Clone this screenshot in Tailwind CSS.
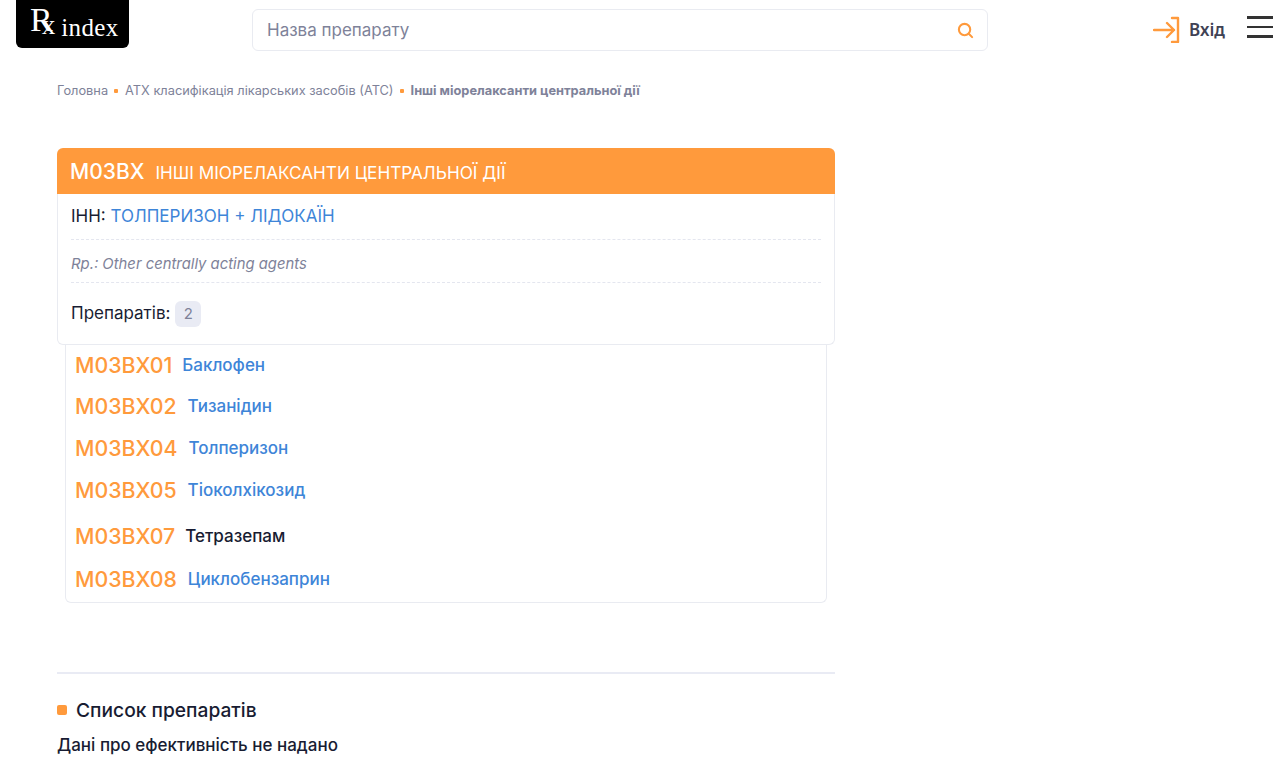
<!DOCTYPE html>
<html>
<head>
    <meta charset="utf-8">
    <title>M03BX</title>
    <script src="https://cdn.jsdelivr.net/npm/@tailwindcss/browser@4"></script>
</head>
<body class="bg-white font-['Inter','Noto_Sans',sans-serif] overflow-hidden">

    <!-- Header -->
    <header class="flex items-start h-[60px] pl-4 pr-[7px]">
        <a href="#" class="flex items-start w-[113px] h-12 bg-black rounded-b-md text-white font-['Liberation_Serif',serif] pl-[14px]">
            <span class="text-[34px] leading-[34px] mt-[3px]">R</span>
            <span class="text-[27px] leading-[27px] mt-[12px] -ml-[11px]">x</span>
            <span class="text-[25px] leading-[25px] mt-[15px] ml-[6px] tracking-[0.4px]">index</span>
        </a>
        <div class="flex items-center justify-between w-[736px] h-[42px] mt-[9px] ml-[123px] pl-[14px] pr-[13px] border border-[#e9ebf1] rounded-md">
            <span class="pt-[2px] text-[17px] text-[#7e8299]">Назва препарату</span>
            <svg width="17" height="17" viewBox="0 0 18 18" fill="none" stroke="#ff9a3c" stroke-width="2.2" stroke-linecap="round"><circle cx="8" cy="8" r="6"/><path d="M12.5 12.5L16 16"/></svg>
        </div>
        <div class="flex items-center ml-auto mt-[16px]">
            <svg width="27" height="27" viewBox="0 0 27 27" fill="none" stroke="#ff9a3c" stroke-width="2.4" stroke-linecap="round" stroke-linejoin="round"><path d="M1 14H21M14 7l7 7-7 7"/><path d="M19 2h6v24h-6"/></svg>
            <span class="ml-[9px] text-[17px] leading-[27px] font-semibold text-[#3f4254] font-['Noto_Sans',sans-serif]">Вхід</span>
            <div class="flex flex-col gap-[7px] ml-[22px] mb-[6px] w-[26px]">
                <div class="h-[2.5px] bg-[#333]"></div>
                <div class="h-[2.5px] bg-[#333]"></div>
                <div class="h-[2.5px] bg-[#333]"></div>
            </div>
        </div>
    </header>

    <main class="w-[778px] ml-[57px]">
        <!-- Breadcrumb -->
        <nav class="flex items-center h-4 mt-[23px] text-[12.8px] text-[#7e8299]">
            <span>Головна</span>
            <span class="w-1 h-1 rounded-[1px] bg-[#ff9a3c] ml-[6px] mr-[7px]"></span>
            <span>АТХ класифікація лікарських засобів (АТС)</span>
            <span class="w-1 h-1 rounded-[1px] bg-[#ff9a3c] mx-[6.5px]"></span>
            <span class="font-bold">Інші міорелаксанти центральної дії</span>
        </nav>

        <!-- ATC card -->
        <section class="mt-[49px] h-[197px]">
            <div class="flex items-baseline h-[46px] bg-[#ff9a3c] text-white rounded-t-md px-[13px] pt-[8px]">
                <span class="text-[21px] font-medium">M03BX</span>
                <span class="ml-[11px] text-[17.2px]">ІНШІ МІОРЕЛАКСАНТИ ЦЕНТРАЛЬНОЇ ДІЇ</span>
            </div>
            <div class="h-[151px] px-[13px] border border-t-0 border-[#e9ebf1] rounded-b-md">
                <div class="h-[46px] pt-[10px] border-b border-dashed border-[#e4e6ef] text-[17px] text-[#181c32]">
                    ІНН: <a href="#" class="text-[#3e85d8]">ТОЛПЕРИЗОН + ЛІДОКАЇН</a>
                </div>
                <div class="h-[43px] pt-[13px] border-b border-dashed border-[#e4e6ef] text-[14.85px] italic text-[#7e8299]">Rp.: Other centrally acting agents</div>
                <div class="flex items-center h-[61px] pt-px text-[17px] text-[#181c32]">
                    Препаратів:
                    <span class="flex items-center justify-center w-[26px] h-[26px] ml-[5px] rounded-md bg-[#e9ebf4] text-[15px] text-[#7e8299]">2</span>
                </div>
            </div>
        </section>

        <!-- Subgroups -->
        <section class="w-[762px] h-[258px] ml-2 pl-[9px] border border-t-0 border-[#e9ebf1] rounded-b-md">
            <div class="flex items-center h-[41px]">
                <span class="text-[21.3px] font-medium text-[#ff9a3c]">M03BX01</span>
                <a href="#" class="ml-[10px] text-[17px] font-medium text-[#3e85d8]">Баклофен</a>
            </div>
            <div class="flex items-center h-[42px]">
                <span class="text-[21.3px] font-medium text-[#ff9a3c]">M03BX02</span>
                <a href="#" class="ml-[11px] text-[17px] font-medium text-[#3e85d8]">Тизанідин</a>
            </div>
            <div class="flex items-center h-[42px]">
                <span class="text-[21.3px] font-medium text-[#ff9a3c]">M03BX04</span>
                <a href="#" class="ml-[11px] text-[17px] font-medium text-[#3e85d8]">Толперизон</a>
            </div>
            <div class="flex items-center h-[42px]">
                <span class="text-[21.3px] font-medium text-[#ff9a3c]">M03BX05</span>
                <a href="#" class="ml-[11px] text-[17px] font-medium text-[#3e85d8]">Тіоколхікозид</a>
            </div>
            <div class="flex items-center h-[50px]">
                <span class="text-[21.3px] font-medium text-[#ff9a3c]">M03BX07</span>
                <span class="ml-[10px] text-[17px] font-medium text-[#181c32]">Тетразепам</span>
            </div>
            <div class="flex items-center h-[35px]">
                <span class="text-[21.3px] font-medium text-[#ff9a3c]">M03BX08</span>
                <a href="#" class="ml-[11px] text-[17px] font-medium text-[#3e85d8]">Циклобензаприн</a>
            </div>
        </section>

        <hr class="mt-[69px] border-t-2 border-[#e9ebf4]">

        <!-- Drug list -->
        <div class="flex items-center mt-[24px]">
            <span class="w-[10px] h-[10px] rounded-[2px] bg-[#ff9a3c]"></span>
            <h2 class="ml-[9px] text-[19.2px] font-medium leading-[24px] text-[#181c32]">Список препаратів</h2>
        </div>
        <p class="mt-[11px] text-[17px] font-medium leading-[24px] text-[#181c32]">Дані про ефективність не надано</p>
    </main>

</body>
</html>
